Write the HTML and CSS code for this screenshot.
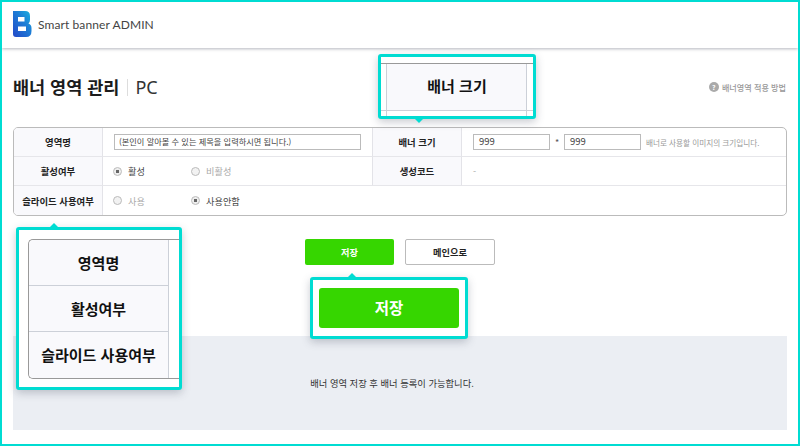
FILE: index.html
```html
<!DOCTYPE html>
<html lang="ko">
<head>
<meta charset="utf-8">
<title>Smart banner ADMIN</title>
<link rel="stylesheet" href="styles.css">
</head>
<body>
<div class="frame">
  <header class="topbar">
    <svg class="logo" width="19" height="26" viewBox="0 0 19 26" aria-hidden="true">
      <defs>
        <linearGradient id="lg" x1="0" y1="1" x2="1" y2="0">
          <stop offset="0" stop-color="#2348c8"/>
          <stop offset=".6" stop-color="#1c7fd6"/>
          <stop offset="1" stop-color="#1ab4e0"/>
        </linearGradient>
      </defs>
      <path fill="url(#lg)" fill-rule="evenodd" d="M0 0H12Q17 0 17 5V9Q17 11 15.500 12.500Q18.500 13.500 18.500 17V20Q18.500 26 13 26H3Q0 26 0 23ZM5 6V10.500H11.500V6ZM5 15.500V20H13V15.500Z"/>
    </svg>
    <span class="brand">Smart banner ADMIN</span>
  </header>

  <main class="content">
    <div class="titlerow">
      <h1 class="title">배너 영역 관리</h1>
      <span class="subtitle">PC</span>
      <a class="help"><span class="helpicon">?</span>배너영역 적용 방법</a>
    </div>

    <table class="form">
      <colgroup>
        <col class="c1"><col class="c2"><col class="c3"><col class="c4">
      </colgroup>
      <tr>
        <th>영역명</th>
        <td><div class="input wide">(본인이 알아볼 수 있는 제목을 입력하시면 됩니다.)</div></td>
        <th class="mid">배너 크기</th>
        <td class="right">
          <div class="sizes">
            <div class="input small">999</div>
            <span class="star">*</span>
            <div class="input small">999</div>
            <span class="note">배너로 사용할 이미지의 크기입니다.</span>
          </div>
        </td>
      </tr>
      <tr>
        <th>활성여부</th>
        <td>
          <div class="radios">
            <span class="radio on">활성</span>
            <span class="radio">비활성</span>
          </div>
        </td>
        <th class="mid">생성코드</th>
        <td class="right dash">-</td>
      </tr>
      <tr>
        <th>슬라이드 사용여부</th>
        <td colspan="3">
          <div class="radios">
            <span class="radio">사용</span>
            <span class="radio on">사용안함</span>
          </div>
        </td>
      </tr>
    </table>

    <div class="actions">
      <button class="btn save">저장</button>
      <button class="btn home">메인으로</button>
    </div>

    <div class="notice">배너 영역 저장 후 배너 등록이 가능합니다.</div>
  </main>

  <aside class="callout call-size">
    <div class="size-cell">배너 크기</div>
  </aside>

  <aside class="callout call-labels">
    <div class="label-table">
      <div class="label-row">영역명</div>
      <div class="label-row">활성여부</div>
      <div class="label-row">슬라이드 사용여부</div>
    </div>
  </aside>

  <aside class="callout call-save">
    <div class="bigsave">저장</div>
  </aside>
</div>
</body>
</html>
```
FILE: styles.css
```css
* { box-sizing: border-box; }
html, body { margin: 0; padding: 0; }
body {
  width: 800px;
  height: 446px;
  overflow: hidden;
  background: #fff;
  font-family: "Noto Sans CJK KR", "Noto Sans", sans-serif;
  color: #222;
}
.frame {
  position: relative;
  width: 800px;
  height: 446px;
  border: 2px solid #00dcd2;
  overflow: hidden;
}
.topbar {
  height: 46px;
  display: flex;
  align-items: center;
  padding: 0 0 0 11px;
  box-shadow: 0 1px 3px rgba(90, 95, 110, .45);
}
.logo { margin: -3px 6px 0 0; }
.brand {
  font-family: "Lato", "Noto Sans", sans-serif;
  font-size: 12px;
  color: #444;
  letter-spacing: .1px;
  margin-top: -1px;
}
.content { padding: 0 11px; }
.titlerow {
  position: relative;
  height: 79px;
  display: flex;
  align-items: center;
  padding-bottom: 1px;
}
.title {
  margin: 0;
  font-size: 17.500px;
  font-weight: 700;
  color: #1c1c1c;
  line-height: 24px;
  padding-right: 8px;
  border-right: 1px solid #ddd;
  height: 17px;
  display: flex;
  align-items: center;
}
.subtitle {
  margin-left: 7px;
  font-size: 18px;
  font-weight: 400;
  color: #333;
  font-family: "Noto Sans", sans-serif;
}
.help {
  margin-left: auto;
  margin-right: 1px;
  display: flex;
  align-items: center;
  font-size: 8.100px;
  color: #999;
  font-weight: 500;
}
.helpicon {
  width: 10px;
  height: 10px;
  border-radius: 50%;
  background: #aaa;
  color: #fff;
  font-size: 7px;
  font-weight: 700;
  line-height: 10px;
  text-align: center;
  margin-right: 3px;
}
.form {
  width: 774px;
  table-layout: fixed;
  border-collapse: separate;
  border-spacing: 0;
  border: 1px solid #bbb;
  border-radius: 5px;
  overflow: hidden;
}
.c1 { width: 89px; }
.c2 { width: 269px; }
.c3 { width: 90px; }
.form th, .form td {
  height: 29px;
  padding: 0;
  border-bottom: 1px solid #e6e6ea;
  font-size: 9.400px;
  vertical-align: middle;
}
.form tr:last-child th, .form tr:last-child td { border-bottom: 0; }
.form th {
  background: #f9f9fc;
  color: #222;
  font-weight: 700;
  text-align: center;
  border-right: 1px solid #e3e3e8;
}
.form td { padding-left: 11px; color: #555; }
.form th.mid { border-left: 1px solid #e3e3e8; }
.input {
  border: 1px solid #bbb;
  height: 16px;
  line-height: 13px;
  font-size: 8.200px;
  color: #444;
  padding-left: 4px;
  background: #fff;
}
.input.wide { width: 247px; }
.input.small { width: 77px; font-size: 9.500px; padding-left: 5px; }
.sizes { display: flex; align-items: center; }
.star { width: 14px; text-align: center; font-size: 9px; color: #555; }
.note { margin-left: 5px; font-size: 7.600px; color: #999; }
.form td.dash { color: #aaa; font-size: 9px; }
.radios { display: flex; margin-left: -2px; }
.radio {
  width: 78px;
  display: flex;
  align-items: center;
  font-size: 9.200px;
  color: #aaa;
}
.radio::before {
  content: "";
  width: 7px;
  height: 7px;
  border-radius: 50%;
  border: 1px solid #bbb;
  background: #f2f2f2;
  margin: 0 6px 0 1px;
  flex: none;
}
.radio.on { color: #444; }
.radio.on::before {
  background: radial-gradient(circle, #666 0 1.500px, #eee 2px);
}
.actions {
  display: flex;
  gap: 11px;
  margin-top: 23px;
  padding-left: 292px;
}
.btn {
  width: 89px;
  height: 26px;
  border-radius: 2px;
  font-family: inherit;
  font-size: 9.200px;
  font-weight: 700;
  padding: 0;
}
.save { background: #36d600; border: 0; color: #fff; }
.home { width: 90px; background: #fff; border: 1px solid #bbb; color: #222; }
.notice {
  margin-top: 71px;
  height: 94px;
  background: #ebeef3;
  display: flex;
  align-items: center;
  justify-content: center;
  padding-right: 16px;
  font-size: 9.300px;
  color: #333;
}
.callout {
  position: absolute;
  background: #fff;
  border: 3px solid #00dcd2;
  border-radius: 3px;
  box-shadow: 0 3px 8px rgba(60, 70, 90, .28);
  z-index: 2;
}
.callout::after {
  content: "";
  position: absolute;
  width: 0;
  height: 0;
  border-left: 4px solid transparent;
  border-right: 4px solid transparent;
}
.call-size { left: 376px; top: 52px; width: 158px; height: 65px; }
.call-size::after { top: 100%; left: 34px; margin-top: 3px; border-top: 4px solid #00dcd2; }
.size-cell {
  margin-top: 6px;
  height: 53px;
  border-top: 1px solid #999;
  background:
    linear-gradient(#ccd0d8, #ccd0d8) 0 46px / 100% 1px no-repeat,
    linear-gradient(#ccd0d8, #ccd0d8) 5px 0 / 1px 100% no-repeat,
    linear-gradient(#ccd0d8, #ccd0d8) 145px 0 / 1px 100% no-repeat,
    linear-gradient(#f9f9fc, #f9f9fc) 6px 0 / 139px 46px no-repeat;
  font-size: 15px;
  font-weight: 700;
  color: #111;
  text-align: center;
  line-height: 44px;
}
.call-labels { left: 14px; top: 225px; width: 166px; height: 163px; }
.call-labels::after { bottom: 100%; left: 31px; margin-bottom: 3px; border-bottom: 4px solid #00dcd2; }
.label-table {
  margin: 9px 0 0 9px;
  width: 151px;
  height: 140px;
  border: 1px solid #999;
  border-right: 0;
  border-radius: 5px 0 0 5px;
  display: grid;
  grid-template-rows: 1fr 1fr 1fr;
  background: linear-gradient(#ccd0d8, #ccd0d8) 139px 0 / 1px 100% no-repeat;
}
.label-row {
  width: 139px;
  background: #f9f9fc;
  border-bottom: 1px solid #ccd0d8;
  display: flex;
  align-items: center;
  justify-content: center;
  padding-bottom: 1px;
  font-size: 15px;
  font-weight: 700;
  color: #111;
}
.label-row:first-child { border-top-left-radius: 5px; }
.label-row:last-child { border-bottom: 0; border-bottom-left-radius: 5px; }
.call-save { left: 308px; top: 275px; width: 158px; height: 62px; padding: 8px 6px; }
.call-save::after { bottom: 100%; left: 35px; margin-bottom: 3px; border-bottom: 4px solid #00dcd2; }
.bigsave {
  height: 40px;
  background: #36d600;
  border-radius: 3px;
  color: #fff;
  font-size: 15.500px;
  font-weight: 700;
  text-align: center;
  line-height: 38px;
}
```
